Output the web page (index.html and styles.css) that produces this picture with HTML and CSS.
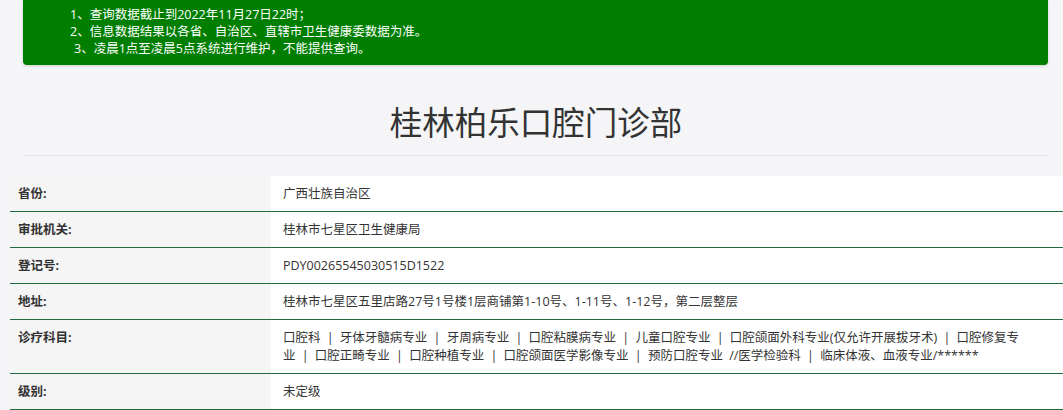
FILE: index.html
```html
<!DOCTYPE html>
<html lang="zh">
<head>
<meta charset="utf-8">
<title>桂林柏乐口腔门诊部</title>
<link rel="stylesheet" href="styles.css">
</head>
<body>
<div class="notice">
  <div class="notice-line">1、查询数据截止到2022年11月27日22时；</div>
  <div class="notice-line">2、信息数据结果以各省、自治区、直辖市卫生健康委数据为准。</div>
  <div class="notice-line notice-line-indent">3、凌晨1点至凌晨5点系统进行维护，不能提供查询。</div>
</div>
<div class="title-wrap">
  <h1 class="title">桂林柏乐口腔门诊部</h1>
</div>
<table class="info">
  <tr><th>省份:</th><td>广西壮族自治区</td></tr>
  <tr><th>审批机关:</th><td>桂林市七星区卫生健康局</td></tr>
  <tr><th>登记号:</th><td>PDY00265545030515D1522</td></tr>
  <tr><th>地址:</th><td>桂林市七星区五里店路27号1号楼1层商铺第1-10号、1-11号、1-12号，第二层整层</td></tr>
  <tr><th>诊疗科目:</th><td class="subjects">口腔科 | 牙体牙髓病专业 | 牙周病专业 | 口腔粘膜病专业 | 儿童口腔专业 | 口腔颌面外科专业(仅允许开展拔牙术) | 口腔修复专业 | 口腔正畸专业 | 口腔种植专业 | 口腔颌面医学影像专业 | 预防口腔专业 //医学检验科 | 临床体液、血液专业/******</td></tr>
  <tr><th>级别:</th><td>未定级</td></tr>
</table>
</body>
</html>
```
FILE: styles.css
```css
html, body {
  margin: 0;
  padding: 0;
}
body {
  background: #f5f5f7;
  font-family: "Open Sans", "Noto Sans CJK SC", sans-serif;
  font-size: 12.5px;
  color: #333;
  overflow: hidden;
}
.notice {
  margin: 0 15px 0 23px;
  background: #007e00;
  color: #fff;
  padding: 6px 20px 8px 47px;
  border-radius: 0 0 4px 4px;
  box-shadow: 0 1px 3px rgba(0,0,0,0.15);
  line-height: 17px;
  font-size: 12.5px;
}
.notice-line-indent {
  padding-left: 4px;
}
.title-wrap {
  margin: 40px 15px 0 24px;
  padding-bottom: 14px;
  border-bottom: 1px solid #e6e6e8;
}
.title {
  margin: 0;
  font-size: 32.5px;
  line-height: 36px;
  font-weight: normal;
  text-align: center;
  color: #333;
}
.info {
  margin: 20px 0 0 10px;
  width: 1070px;
  border-collapse: collapse;
  background: #fff;
}
.info th, .info td {
  border-bottom: 1px solid #1f6a40;
  padding: 9px 12px 8px;
  line-height: 18px;
  vertical-align: top;
  text-align: left;
  font-size: 12.5px;
}
.info th {
  width: 239px;
  background: #f5f5f5;
  font-weight: bold;
  color: #333;
  padding-left: 8px;
  padding-right: 14px;
}
.info td {
  color: #333;
  padding-right: 52px;
}
.subjects {
  word-spacing: 3px;
}
```
